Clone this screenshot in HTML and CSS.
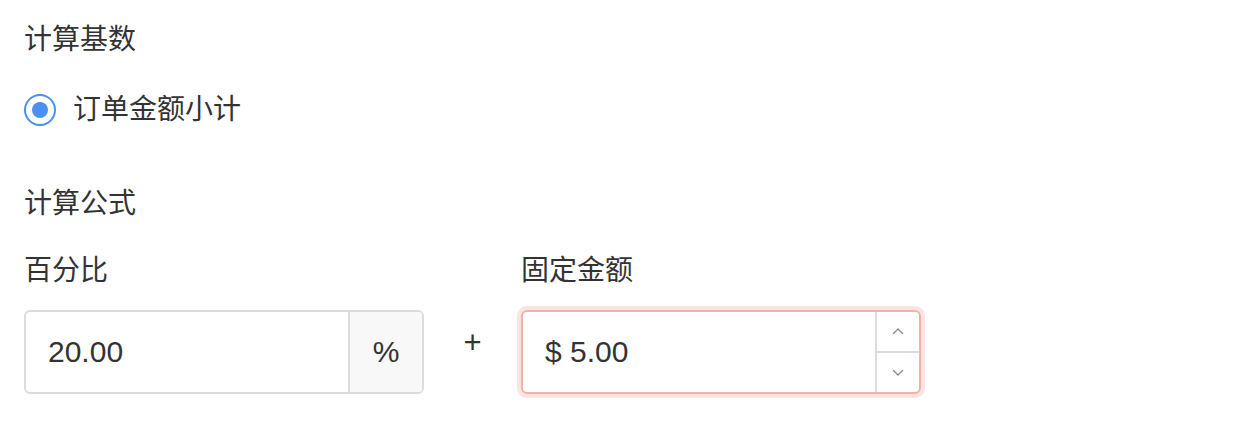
FILE: index.html
```html
<!DOCTYPE html>
<html lang="zh-CN">

<head>
    <meta charset="UTF-8">
    <meta name="viewport" content="width=device-width, initial-scale=1.0">
    <title>计算设置</title>
    <link rel="stylesheet" href="styles.css">
</head>

<body>
    <div class="panel">
        <h3 class="section-title">计算基数</h3>
        <label class="radio">
            <span class="radio-dot"></span>
            <span class="radio-text">订单金额小计</span>
        </label>

        <h3 class="section-title formula">计算公式</h3>
        <div class="fields">
            <div class="field">
                <div class="field-label">百分比</div>
                <div class="input-group">
                    <div class="input-value">20.00</div>
                    <div class="addon">%</div>
                </div>
            </div>
            <div class="plus">+</div>
            <div class="field">
                <div class="field-label">固定金额</div>
                <div class="input-group focused">
                    <div class="input-value">$ 5.00</div>
                    <div class="spinner">
                        <span class="spin-btn">
                            <svg width="12" height="7" viewBox="0 0 12 7"><polyline points="1,6 6,1 11,6" /></svg>
                        </span>
                        <span class="spin-btn">
                            <svg width="12" height="7" viewBox="0 0 12 7"><polyline points="1,1 6,6 11,1" /></svg>
                        </span>
                    </div>
                </div>
            </div>
        </div>
    </div>
</body>

</html>
```

FILE: styles.css
```css
* {
    margin: 0;
    padding: 0;
    box-sizing: border-box;
}

body {
    background: #fff;
    color: #333;
    font-family: "Liberation Sans", "Noto Sans CJK SC", sans-serif;
}

.panel {
    padding: 20px 24px;
}

.section-title {
    font-size: 28px;
    font-weight: normal;
    line-height: 40px;
}

.section-title.formula {
    margin-top: 58px;
}

/* 单选 */
.radio {
    display: flex;
    align-items: center;
    gap: 17px;
    margin-top: 34px;
    height: 32px;
}

.radio-dot {
    width: 32px;
    height: 32px;
    border: 2px solid #4a8ff2;
    border-radius: 50%;
    display: flex;
    align-items: center;
    justify-content: center;
}

.radio-dot::after {
    content: "";
    width: 16px;
    height: 16px;
    border-radius: 50%;
    background: #4a8ff2;
}

.radio-text {
    font-size: 28px;
    line-height: 40px;
}

/* 计算公式 */
.fields {
    display: flex;
    align-items: flex-end;
    margin-top: 27px;
}

.field {
    width: 400px;
}

.field-label {
    font-size: 28px;
    line-height: 40px;
    margin-bottom: 19px;
}

.input-group {
    display: flex;
    height: 84px;
    border: 2px solid #dcdcdc;
    border-radius: 6px;
    overflow: hidden;
}

.input-group.focused {
    border-color: #efb1a8;
    box-shadow: 0 0 0 4px rgba(239, 177, 168, .35);
}

.input-value {
    flex: 1;
    display: flex;
    align-items: center;
    padding-left: 22px;
    font-size: 30px;
}

.addon {
    width: 74px;
    border-left: 2px solid #dcdcdc;
    background: #f8f8f8;
    display: flex;
    align-items: center;
    justify-content: center;
    font-size: 30px;
}

.plus {
    width: 97px;
    height: 84px;
    display: flex;
    align-items: center;
    justify-content: center;
    padding-bottom: 18px;
    font-size: 31px;
}

.spinner {
    width: 44px;
    border-left: 2px solid #dcdcdc;
    display: flex;
    flex-direction: column;
}

.spin-btn {
    flex: 1;
    display: flex;
    align-items: center;
    justify-content: center;
}

.spin-btn + .spin-btn {
    border-top: 2px solid #dcdcdc;
}

.spin-btn svg {
    fill: none;
    stroke: #8c8c8c;
    stroke-width: 1.3;
}
```
